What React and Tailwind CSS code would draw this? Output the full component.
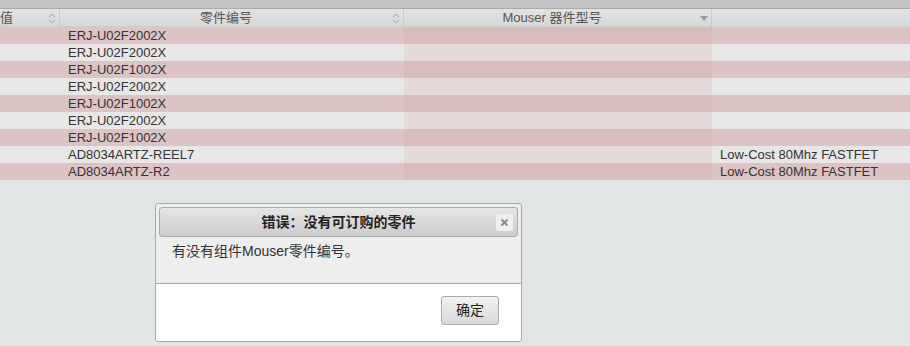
const rows = [
  { part: "ERJ-U02F2002X", desc: "" },
  { part: "ERJ-U02F2002X", desc: "" },
  { part: "ERJ-U02F1002X", desc: "" },
  { part: "ERJ-U02F2002X", desc: "" },
  { part: "ERJ-U02F1002X", desc: "" },
  { part: "ERJ-U02F2002X", desc: "" },
  { part: "ERJ-U02F1002X", desc: "" },
  { part: "AD8034ARTZ-REEL7", desc: "Low-Cost 80Mhz FASTFET" },
  { part: "AD8034ARTZ-R2", desc: "Low-Cost 80Mhz FASTFET" },
];

const font = "font-['Liberation_Sans','Noto_Sans_CJK_SC',sans-serif]";

const SortIcon = () => (
  <svg width="8" height="11" viewBox="0 0 8 11" className="shrink-0">
    <path d="M1 4 L4 1 L7 4" fill="none" stroke="#b5b5b5" strokeWidth="1.2" />
    <path d="M1 7 L4 10 L7 7" fill="none" stroke="#b5b5b5" strokeWidth="1.2" />
  </svg>
);

const DownIcon = () => (
  <svg width="8" height="5" viewBox="0 0 8 5" className="shrink-0">
    <path d="M0 0 L8 0 L4 5 Z" fill="#9a9a9a" />
  </svg>
);

const App = () => {
  return (
    <div className={`relative w-[910px] h-[346px] bg-[#e1e5e5] text-[12px] text-[#333] ${font}`}>
      <div className="h-[9px] bg-[#c3c3c3] border-b border-[#aaaaaa]" />
      <div className="grid grid-cols-[60px_344px_308px_1fr] h-[18px] bg-gradient-to-b from-[#e2e2e2] to-[#d8d8d8] border-b border-[#cfcfcf] text-[#555] text-[13px] leading-[18px]">
        <div className="flex items-center justify-between pr-[3px] border-r border-[#c9c9c9]">
          <span>值</span>
          <SortIcon />
        </div>
        <div className="flex items-center pr-[3px] border-r border-[#c9c9c9]">
          <span className="flex-1 text-center">零件编号</span>
          <SortIcon />
        </div>
        <div className="flex items-center pr-[3px] border-r border-[#c9c9c9]">
          <span className="flex-1 text-center">Mouser 器件型号</span>
          <DownIcon />
        </div>
        <div />
      </div>
      {rows.map((r, i) => {
        const pink = i % 2 === 0;
        return (
          <div
            key={i}
            className={`grid grid-cols-[60px_344px_308px_1fr] h-[17px] leading-[17px] text-[13px] ${pink ? "bg-[#dcc4c4]" : "bg-[#e8e6e6]"}`}
          >
            <div />
            <div className="pl-2">{r.part}</div>
            <div className={pink ? "bg-[#d9bdbd]" : "bg-[#e5d9d9]"} />
            <div className="pl-2">{r.desc}</div>
          </div>
        );
      })}

      <div className="absolute left-[155px] top-[203px] w-[367px] h-[139px] flex flex-col rounded-[3px] border border-[#aaaaaa] bg-[#eeeeee] p-[3px]">
        <div className="relative h-[30px] flex items-center justify-center rounded-[3px] border border-[#aaaaaa] bg-gradient-to-b from-[#e6e6e6] to-[#cccccc]">
          <span className="font-bold text-[14px] text-[#222]">错误：没有可订购的零件</span>
          <div className="absolute right-[4px] top-[6px] w-[17px] h-[17px] flex items-center justify-center bg-[#efefef] rounded-[2px]">
            <svg width="9" height="9" viewBox="0 0 9 9">
              <path d="M1.5 1.5 L7.5 7.5 M7.5 1.5 L1.5 7.5" stroke="#8a8a8a" strokeWidth="2" />
            </svg>
          </div>
        </div>
        <div className="h-[46px] pl-[13px] pt-[4px] text-[14px] text-[#333]">有没有组件Mouser零件编号。</div>
        <div className="flex-1 -mx-[3px] -mb-[3px] bg-white border-t border-[#aaaaaa] rounded-b-[3px] flex justify-end items-start pt-[12px] pr-[22px]">
          <button className="w-[58px] h-[29px] rounded-[3px] border border-[#aaaaaa] bg-gradient-to-b from-[#f2f2f2] to-[#d9d9d9] text-[14px] text-[#222]">
            确定
          </button>
        </div>
      </div>
    </div>
  );
};

export default App;
